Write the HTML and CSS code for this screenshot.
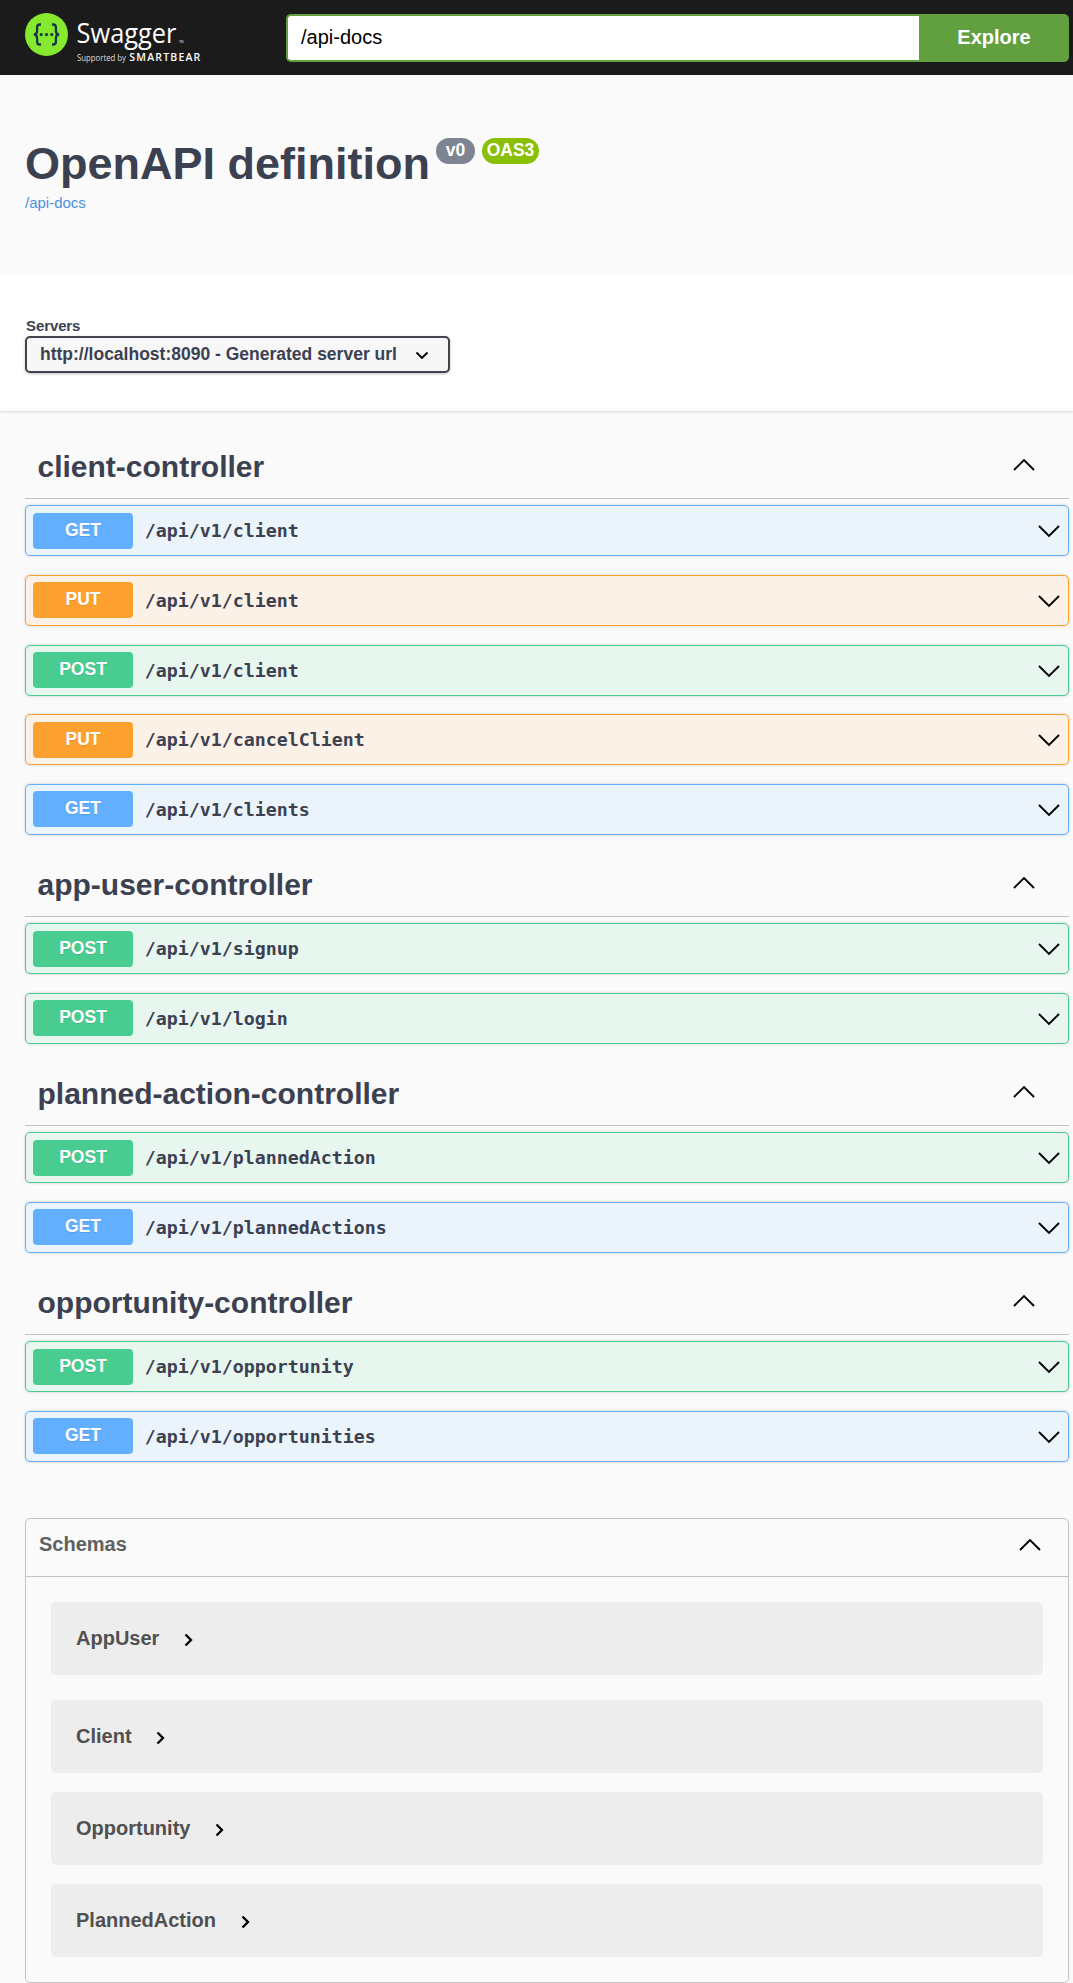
FILE: index.html
```html
<!DOCTYPE html>
<html lang="en">
<head>
<meta charset="utf-8">
<title>Swagger UI</title>
<link rel="stylesheet" href="styles.css">
</head>
<body>
<svg width="0" height="0" class="defs">
  <symbol id="down" viewBox="0 0 24 14"><path d="M2 2 L12 12 L22 2"/></symbol>
  <symbol id="up" viewBox="0 0 24 14"><path d="M2 12 L12 2 L22 12"/></symbol>
  <symbol id="right" viewBox="0 0 10 14"><path d="M1.5 1.5 L7 7 L1.5 12.5"/></symbol>
</svg>
<header class="topbar">
  <svg class="logo" width="190" height="56" viewBox="0 0 190 56">
    <circle cx="21.5" cy="24.5" r="21.5" fill="#85ea2d"/>
    <g fill="none" stroke="#173647" stroke-width="2.3">
      <path d="M16 14.5h-1.200q-2.700 0-2.700 2.800v3.400q0 3.800-3.300 3.800q3.300 0 3.300 3.800v3.400q0 2.800 2.700 2.800h1.200"/>
      <path d="M27 14.500h1.200q2.700 0 2.700 2.800v3.400q0 3.800 3.300 3.800q-3.300 0-3.300 3.800v3.400q0 2.800-2.700 2.800h-1.200"/>
    </g>
    <g fill="#173647"><circle cx="16.200" cy="24.600" r="1.600"/><circle cx="21.500" cy="24.600" r="1.600"/><circle cx="26.800" cy="24.600" r="1.600"/></g>
    <text class="logo-name" x="51.500" y="33.300" textLength="100" lengthAdjust="spacingAndGlyphs">Swagger</text>
    <text class="logo-tm" x="154" y="33.300">TM</text>
    <text class="logo-by" x="52" y="51.300" textLength="49" lengthAdjust="spacingAndGlyphs">Supported by</text>
    <text class="logo-brand" x="104.300" y="51.300" textLength="71" lengthAdjust="spacing">SMARTBEAR</text>
  </svg>
  <form class="search">
    <input class="search-input" type="text" value="/api-docs">
    <button class="search-button" type="button">Explore</button>
  </form>
</header>

<section class="info">
  <div class="info-heading">
    <h1 class="title">OpenAPI definition</h1>
    <span class="pill pill-version">v0</span>
    <span class="pill pill-oas">OAS3</span>
  </div>
  <a class="docs-link">/api-docs</a>
</section>

<section class="servers">
  <span class="servers-label">Servers</span>
  <div class="select">
    <span>http://localhost:8090 - Generated server url</span>
    <svg class="icon select-icon" width="14" height="9" viewBox="0 0 14 9"><path d="M1.500 1.500 L7 7 L12.500 1.500"/></svg>
  </div>
</section>

<main class="content">
  <div class="operations">
    <div class="tag"><h2>client-controller</h2><svg class="icon chevron"><use href="#up"/></svg></div>
    <div class="op get"><b class="method">GET</b><span class="path">/api/v1/client</span><svg class="icon chevron"><use href="#down"/></svg></div>
    <div class="op put"><b class="method">PUT</b><span class="path">/api/v1/client</span><svg class="icon chevron"><use href="#down"/></svg></div>
    <div class="op post"><b class="method">POST</b><span class="path">/api/v1/client</span><svg class="icon chevron"><use href="#down"/></svg></div>
    <div class="op put"><b class="method">PUT</b><span class="path">/api/v1/cancelClient</span><svg class="icon chevron"><use href="#down"/></svg></div>
    <div class="op get"><b class="method">GET</b><span class="path">/api/v1/clients</span><svg class="icon chevron"><use href="#down"/></svg></div>

    <div class="tag"><h2>app-user-controller</h2><svg class="icon chevron"><use href="#up"/></svg></div>
    <div class="op post"><b class="method">POST</b><span class="path">/api/v1/signup</span><svg class="icon chevron"><use href="#down"/></svg></div>
    <div class="op post"><b class="method">POST</b><span class="path">/api/v1/login</span><svg class="icon chevron"><use href="#down"/></svg></div>

    <div class="tag"><h2>planned-action-controller</h2><svg class="icon chevron"><use href="#up"/></svg></div>
    <div class="op post"><b class="method">POST</b><span class="path">/api/v1/plannedAction</span><svg class="icon chevron"><use href="#down"/></svg></div>
    <div class="op get"><b class="method">GET</b><span class="path">/api/v1/plannedActions</span><svg class="icon chevron"><use href="#down"/></svg></div>

    <div class="tag"><h2>opportunity-controller</h2><svg class="icon chevron"><use href="#up"/></svg></div>
    <div class="op post"><b class="method">POST</b><span class="path">/api/v1/opportunity</span><svg class="icon chevron"><use href="#down"/></svg></div>
    <div class="op get"><b class="method">GET</b><span class="path">/api/v1/opportunities</span><svg class="icon chevron"><use href="#down"/></svg></div>
  </div>

  <section class="models">
    <div class="models-head"><h3>Schemas</h3><svg class="icon chevron"><use href="#up"/></svg></div>
    <div class="models-list">
      <div class="model">AppUser<svg class="icon model-icon"><use href="#right"/></svg></div>
      <div class="model">Client<svg class="icon model-icon"><use href="#right"/></svg></div>
      <div class="model">Opportunity<svg class="icon model-icon"><use href="#right"/></svg></div>
      <div class="model">PlannedAction<svg class="icon model-icon"><use href="#right"/></svg></div>
    </div>
  </section>
</main>
</body>
</html>
```
FILE: styles.css
```css
* { box-sizing: border-box; }
body {
  margin: 0;
  background: #fafafa;
  color: #3b4151;
  font-family: "Liberation Sans", Arial, sans-serif;
}
h1, h2, h3 { margin: 0; }
.defs { display: block; }
.icon { flex: none; fill: none; stroke: #000; stroke-width: 1.9; }
.chevron { width: 24px; height: 14px; }

.topbar {
  display: flex;
  height: 75px;
  padding: 10px 4px 0 25px;
  background: #1b1b1b;
}
.logo { display: block; flex: none; }
.logo text { fill: #fff; font-family: "Open Sans", "Noto Sans", sans-serif; }
.logo .logo-name { font-size: 28px; font-weight: 400; }
.logo .logo-tm { font-size: 3px; }
.logo .logo-by { font-size: 8.800px; font-weight: 400; fill: #ddd; }
.logo .logo-brand { font-size: 10.500px; font-weight: 600; }
.search { display: flex; flex: 1; height: 48px; margin: 4px 0 0 71px; }
.search-input {
  flex: 1;
  min-width: 0;
  padding: 0 13px 2px;
  border: 2px solid #62a03f;
  border-right: 0;
  border-radius: 5px 0 0 5px;
  background: #fff;
  color: #000;
  font: 20px "Liberation Sans", Arial, sans-serif;
}
.search-button {
  width: 150px;
  padding: 0 0 2px;
  border: 0;
  border-radius: 0 5px 5px 0;
  background: #62a03f;
  color: #fff;
  font: bold 20px "Liberation Sans", Arial, sans-serif;
}

.info { height: 200px; padding: 63px 25px 0; }
.info-heading { display: flex; align-items: flex-start; height: 56px; }
.title { margin-right: 6px; font-size: 45px; line-height: 52px; }
.pill {
  height: 26px;
  margin-right: 7px;
  border-radius: 13px;
  color: #fff;
  font-size: 17.500px;
  font-weight: bold;
  line-height: 24px;
  text-align: center;
}
.pill-version { width: 39px; background: #7d8492; }
.pill-oas { width: 57px; background: #89bf04; }
.docs-link { display: block; color: #4990e2; font-size: 15px; line-height: 17px; }

.servers {
  height: 136px;
  padding: 42px 25px 0;
  background: #fff;
  box-shadow: 0 1px 2px rgba(0, 0, 0, .15);
}
.servers-label { display: block; padding-left: 1px; height: 19px; font-size: 15px; font-weight: bold; line-height: 17px; letter-spacing: -.1px; }
.select {
  display: flex;
  align-items: center;
  justify-content: space-between;
  width: 425px;
  height: 37px;
  padding: 0 19px 1px 13px;
  border: 2px solid #41444e;
  border-radius: 5px;
  background: #f7f7f7;
  box-shadow: 0 1px 3px rgba(0, 0, 0, .25);
  font-size: 17.500px;
  font-weight: bold;
  white-space: nowrap;
}
.select-icon { margin-top: 2px; }

.content { padding: 24.520px 4px 0 25px; }
.operations { display: flex; flex-direction: column; gap: 18.680px; }
.tag {
  display: flex;
  align-items: center;
  justify-content: space-between;
  height: 63.600px;
  margin-bottom: -12.600px;
  padding: 0 33px 0 12.500px;
  border-bottom: 1px solid rgba(59, 65, 81, .3);
}
.tag h2 { font-size: 30px; line-height: 34px; }
.tag .chevron { margin-bottom: 4px; }
.op {
  display: flex;
  align-items: center;
  height: 51px;
  padding: 0 7px;
  border: 1px solid;
  border-radius: 5px;
  box-shadow: 0 0 3px rgba(0, 0, 0, .19);
}
.op .chevron { margin-top: 1px; }
.method {
  width: 100px;
  height: 36px;
  border-radius: 4px;
  color: #fff;
  font-size: 17.500px;
  line-height: 34px;
  text-align: center;
  text-shadow: 0 1px 0 rgba(0, 0, 0, .1);
}
.path {
  flex: 1;
  padding-left: 11.800px;
  font: bold 18.270px "DejaVu Sans Mono", monospace;
}
.get { border-color: #61affe; background: #ebf3fb; }
.get .method { background: #61affe; }
.put { border-color: #fca130; background: #fbf1e6; }
.put .method { background: #fca130; }
.post { border-color: #49cc90; background: #e8f6f0; }
.post .method { background: #49cc90; }

.models {
  height: 465px;
  margin-top: 56px;
  border: 1px solid rgba(59, 65, 81, .3);
  border-radius: 5px;
}
.models-head {
  display: flex;
  align-items: center;
  justify-content: space-between;
  height: 58px;
  padding: 0 26px 5px 13px;
  border-bottom: 1px solid rgba(59, 65, 81, .3);
}
.models-head h3 { color: #606060; font-size: 20px; }
.models-list { display: flex; flex-direction: column; gap: 19px; padding: 25px; }
.model {
  display: flex;
  align-items: center;
  gap: 24.500px;
  height: 73px;
  padding-left: 25px;
  border-radius: 5px;
  background: #ededed;
  color: #505050;
  font-size: 20px;
  font-weight: bold;
}
.model:first-child { margin-bottom: 6px; }
.model-icon { width: 10px; height: 14px; margin-top: 4px; stroke-width: 2.300; }
```
